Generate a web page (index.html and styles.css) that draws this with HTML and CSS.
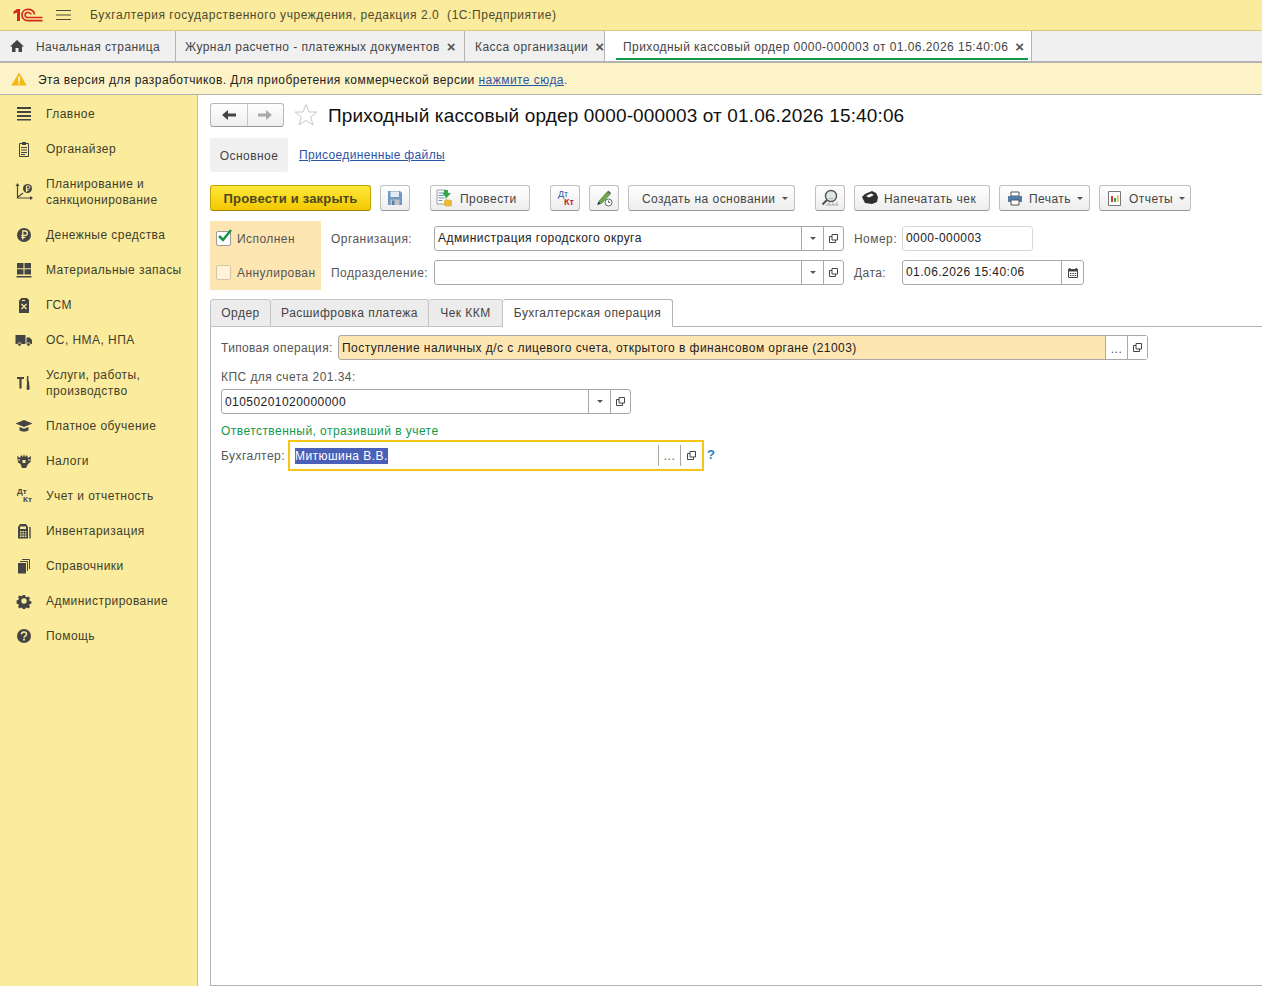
FILE: index.html
```html
<!DOCTYPE html>
<html lang="ru">
<head>
<meta charset="utf-8">
<title>Приходный кассовый ордер</title>
<link rel="stylesheet" href="styles.css">
</head>
<body>
<div class="app">
  <header class="topbar">
    <svg class="logo" width="30" height="16" viewBox="0 0 30 16"><path d="M.5 4.500 4 2h3v12H4V5.500L.5 7z" fill="#d5281f"/><path d="M21.500 7.500C21 4 18.300 2.400 15 2.400c-3.600 0-6 2.500-6 5.600s2.400 5.600 6 5.600H29.500" fill="none" stroke="#d5281f" stroke-width="1.700"/><path d="M18.300 7.500C17.800 6.200 16.600 5.400 15 5.400c-1.700 0-2.900 1.200-2.900 2.600s1.200 2.600 2.900 2.600H29.500" fill="none" stroke="#d5281f" stroke-width="1.500"/></svg>
    <svg class="burger" width="15" height="12" viewBox="0 0 15 12"><path d="M0 1.500h15M0 6h15M0 10.500h15" stroke="#4a4a3a" stroke-width="1"/></svg>
    <span class="app-title">Бухгалтерия государственного учреждения, редакция 2.0&nbsp; (1С:Предприятие)</span>
  </header>

  <nav class="tabbar">
    <div class="wtab wtab-home">
      <svg width="14" height="12" viewBox="0 0 14 12"><path d="M7 0 0 6.500h2V12h3.500V8h3v4H12V6.500h2z" fill="#444"/></svg>
      <span>Начальная страница</span>
    </div>
    <div class="wtab wtab-j"><span>Журнал расчетно - платежных документов</span><b class="x">×</b></div>
    <div class="wtab wtab-k"><span>Касса организации</span><b class="x">×</b></div>
    <div class="wtab wtab-active"><span>Приходный кассовый ордер 0000-000003 от 01.06.2026 15:40:06</span><b class="x">×</b></div>
  </nav>

  <div class="notice">
    <svg width="16" height="14" viewBox="0 0 16 14"><path d="M8 0.500 15.700 13.500H.3z" fill="#f5b90f"/><path d="M7.200 4.500h1.600v5H7.200zM7.200 10.500h1.600V12H7.200z" fill="#fff"/></svg>
    <span class="notice-text">Эта версия для разработчиков. Для приобретения коммерческой версии <a class="link" href="#">нажмите сюда</a><span class="muted">.</span></span>
  </div>

  <div class="main">
    <aside class="side">
      <div class="sitem"><svg width="16" height="16" viewBox="0 0 16 16"><path d="M1 1h14v2H1zM1 5h14v2H1zM1 9h14v2H1zM1 13h14v1.600H1z" fill="#444"/></svg><span>Главное</span></div>
      <div class="sitem"><svg width="16" height="16" viewBox="0 0 16 16"><path d="M3.500 2.500h9v13h-9z" fill="none" stroke="#444"/><path d="M6 1h4v3H6zM5 6h6v1H5zM5 8.500h6v1H5zM5 11h6v1H5zM5 13h4v1H5z" fill="#444"/></svg><span>Органайзер</span></div>
      <div class="sitem two"><svg width="18" height="18" viewBox="0 0 18 18"><path d="M2.500 2v13H17" fill="none" stroke="#444" stroke-width="1.200"/><path d="M2.500 0 .5 3h4zM18 15l-3-2v4z" fill="#444"/><path d="M3 14 8 10" stroke="#444" stroke-width="1.200"/><circle cx="12.500" cy="5.500" r="4.500" fill="#444"/><path d="M11.500 9V2.800h1.800a1.400 1.400 0 0 1 0 3h-2.500M10.800 7.400h2.800" fill="none" stroke="#fbeb9c"/></svg><span>Планирование и санкционирование</span></div>
      <div class="sitem"><svg width="16" height="16" viewBox="0 0 16 16"><circle cx="8" cy="8" r="7" fill="#444"/><path d="M6.800 12.500V4h2.400a2 2 0 0 1 0 4.300H5.300M5.300 10.400h4" fill="none" stroke="#fbeb9c" stroke-width="1.300"/></svg><span>Денежные средства</span></div>
      <div class="sitem"><svg width="16" height="16" viewBox="0 0 16 16"><path d="M1 1h6.500v5.300H1zM8.500 1H15v5.300H8.500zM1 7.300h6.500v5.300H1zM8.500 7.300H15v5.300H8.500zM.5 14H15.500v1.500H.5z" fill="#444"/></svg><span>Материальные запасы</span></div>
      <div class="sitem"><svg width="16" height="16" viewBox="0 0 16 16"><path d="M3 3.500 5.500 1h5.500l2 2v13H3z" fill="#444"/><path d="M5.500 7 10.500 12M10.500 7 5.500 12" stroke="#fbeb9c" stroke-width="1.200"/><path d="M6 3h3v1H6z" fill="#fbeb9c"/></svg><span>ГСМ</span></div>
      <div class="sitem"><svg width="17" height="16" viewBox="0 0 17 16"><path d="M0 3h10v9H0zM11 5.500h3.200L16.500 8v4H11z" fill="#444"/><circle cx="4" cy="12.500" r="1.800" fill="#444" stroke="#fbeb9c" stroke-width=".8"/><circle cx="13" cy="12.500" r="1.800" fill="#444" stroke="#fbeb9c" stroke-width=".8"/></svg><span>ОС, НМА, НПА</span></div>
      <div class="sitem two"><svg width="16" height="16" viewBox="0 0 16 16"><path d="M1 2h7v2H5.600v9.500H3.400V4H1z" fill="#444"/><path d="M11 1h1.400v5h.7v2l.5 5.500a1.500 1.500 0 0 1-3 0L11 8V6h-.3z" fill="#444"/></svg><span>Услуги, работы, производство</span></div>
      <div class="sitem"><svg width="17" height="16" viewBox="0 0 17 16"><path d="M8.500 2 17 5.500l-8.500 3.500L0 5.500z" fill="#444"/><path d="M4 9v3.500c2.500 1.500 6.500 1.500 9 0V9l-4.500 1.800z" fill="#444"/></svg><span>Платное обучение</span></div>
      <div class="sitem"><svg width="16" height="16" viewBox="0 0 16 16"><path d="M1 3 4 5l1-3 2 2 1-3 1 3 2-2 1 3 3-2-.5 6-2.500 2L10 15H6L4.500 11 2 9.500z" fill="#444"/><path d="M6.500 7h3v3h-3z" fill="#fbeb9c"/><path d="M3 6v2M13 6v2" stroke="#fbeb9c"/></svg><span>Налоги</span></div>
      <div class="sitem"><span class="dtkt"><i>Дт</i><i class="kt">Кт</i></span><span>Учет и отчетность</span></div>
      <div class="sitem"><svg width="16" height="16" viewBox="0 0 16 16"><path d="M2 4 4 1h6l2 3v11.500H2z" fill="#444"/><path d="M4 3.500h6v2.500H4z" fill="#fbeb9c"/><path d="M4 8h1.500v1.300H4zM6.400 8h1.500v1.300H6.400zM8.800 8h1.500v1.300H8.800zM4 10.300h1.500v1.300H4zM6.400 10.300h1.500v1.300H6.400zM8.800 10.300h1.500v1.300H8.800zM4 12.600h1.500v1.300H4zM6.400 12.600h1.500v1.300H6.400zM8.800 12.600h1.500v1.300H8.800z" fill="#fbeb9c"/><path d="M14 4v11.500" stroke="#444" stroke-width="1.400"/></svg><span>Инвентаризация</span></div>
      <div class="sitem"><svg width="16" height="16" viewBox="0 0 16 16"><path d="M2 5h8v10.500H2z" fill="#444"/><path d="M4 3.500h7.500V13M6 1.500h7.500V11" fill="none" stroke="#444"/></svg><span>Справочники</span></div>
      <div class="sitem"><svg width="16" height="16" viewBox="0 0 16 16"><path d="M6.600 1h2.800l.4 2 1.500.7 1.800-1.100 2 2-1.100 1.800.7 1.500 2 .4v2.800l-2 .4-.7 1.500 1.100 1.800-2 2-1.800-1.100-1.500.7-.4 2H6.600l-.4-2-1.500-.7-1.800 1.100-2-2 1.100-1.800-.7-1.500-2-.4V7.100l2-.4.700-1.500-1.100-1.800 2-2 1.800 1.100 1.500-.7z" transform="translate(1.200 1.200) scale(.85)" fill="#444"/><circle cx="8" cy="8" r="2.700" fill="#fbeb9c"/></svg><span>Администрирование</span></div>
      <div class="sitem"><svg width="16" height="16" viewBox="0 0 16 16"><circle cx="8" cy="8" r="7" fill="#444"/><path d="M5.500 6.300C5.500 4.800 6.600 4 8 4s2.500.8 2.500 2.100c0 2-2.500 1.900-2.500 3.700" fill="none" stroke="#fbeb9c" stroke-width="1.600"/><path d="M7.100 10.800h1.800v1.700H7.100z" fill="#fbeb9c"/></svg><span>Помощь</span></div>
    </aside>

    <section class="content">
      <div class="titlerow">
        <div class="navbtns">
          <div class="navb"><svg width="14" height="10" viewBox="0 0 14 10"><path d="M0 5 6 0v3.500h8v3H6V10z" fill="#444"/></svg></div>
          <div class="navb"><svg width="14" height="10" viewBox="0 0 14 10"><path d="M14 5 8 0v3.500H0v3h8V10z" fill="#aaa"/></svg></div>
        </div>
        <svg class="star" width="24" height="24" viewBox="0 0 24 24"><path d="M12 1.500 15 9h8l-6.300 5 2.300 8-7-4.600L5 22l2.300-8L1 9h8z" fill="#fff" stroke="#c9c9c9"/></svg>
        <h1>Приходный кассовый ордер 0000-000003 от 01.06.2026 15:40:06</h1>
      </div>

      <div class="subtabs">
        <div class="subtab">Основное</div>
        <a class="link sublink" href="#">Присоединенные файлы</a>
      </div>

      <div class="toolbar">
        <div class="btn primary w161"><span>Провести и закрыть</span></div>
        <div class="btn w30 m9"><svg width="16" height="16" viewBox="0 0 16 16"><path d="M1 1h12l2 2v12H1z" fill="#7397c2"/><path d="M3.500 1.500h8.500v5.500H3.500z" fill="#e3ebf4"/><path d="M3.500 9.500h9v5.500h-9z" fill="#b9c4cc"/><path d="M5 10.500h2.500V15H5z" fill="#5f7e9f"/></svg></div>
        <div class="btn lft w100 m20 pl5"><svg width="18" height="18" viewBox="0 0 18 18"><path d="M1 1h9v14H1z" fill="#fff" stroke="#8a8a8a" stroke-width=".8"/><path d="M2.500 4h6M2.500 6.500h5M2.500 9h6M2.500 11.500h4" stroke="#6f8fb0"/><path d="M8 1h4v3h3l-4.500 5L6 4h2z" fill="#38a84a"/><ellipse cx="12" cy="12" rx="4" ry="1.500" fill="#e9b93a"/><path d="M8 12v4c0 2 8 2 8 0v-4" fill="#e9b93a"/></svg><span>Провести</span></div>
        <div class="btn w30 m20"><span class="dtkt color"><i>Дт</i><i class="kt">Кт</i></span></div>
        <div class="btn w30 m9"><svg width="18" height="18" viewBox="0 0 18 18"><path d="M4 12 12 3l3 2.500L7 14l-3.500 1.500z" fill="#6aa84f" stroke="#4a7a35" stroke-width=".6"/><path d="M12 3l3 2.500 1.200-1.500-3-2.500z" fill="#666"/><path d="M2 16l1.500-3.500 2 2z" fill="#333"/><circle cx="13.500" cy="13.500" r="3.500" fill="#fff" stroke="#666"/><path d="M13.500 11.500v2h1.800" fill="none" stroke="#666"/></svg></div>
        <div class="btn lft w167 m9 pl13"><span>Создать на основании</span><i class="caret"></i></div>
        <div class="btn w30 m20"><svg width="18" height="18" viewBox="0 0 18 18"><circle cx="10" cy="7" r="5.500" fill="#dfe8e4" stroke="#555" stroke-width="1.400"/><path d="M6 11 1.500 15.500" stroke="#555" stroke-width="2.200"/><path d="M5 16h12M8 13v3M12 13v3M16 13v3M8 9.500h4" stroke="#9a9a9a" stroke-width=".8"/></svg></div>
        <div class="btn lft w136 m9 pl7"><svg width="16" height="14" viewBox="0 0 16 14"><path d="M0 6 3 3l7-3 4 2 2 4-1 5-5 2-7-1z" fill="#2e2e2e"/><path d="M4 5 9 2.500l3 1.500-5 2.500z" fill="#fff"/></svg><span>Напечатать чек</span></div>
        <div class="btn lft w91 m9 pl7"><svg width="16" height="15" viewBox="0 0 16 15"><path d="M4 1h8v4H4z" fill="#fff" stroke="#555"/><path d="M1 5h14v6H1z" fill="#4d7da8"/><path d="M4 9h8v5H4z" fill="#fff" stroke="#555"/></svg><span>Печать</span><i class="caret"></i></div>
        <div class="btn lft w92 m9 pl8"><svg class="rep" width="13" height="15" viewBox="0 0 13 15"><path d="M.5.500h12v14H.5z" fill="#fff" stroke="#777"/><path d="M3 5h2v6H3z" fill="#d33"/><path d="M6 7h2v4H6z" fill="#3a3"/><path d="M9 4h1.500v7H9z" fill="#e9b93a"/></svg><span>Отчеты</span><i class="caret"></i></div>
      </div>

      <div class="head">
        <div class="flags">
          <label class="flag"><span class="check"><svg width="16" height="14" viewBox="0 0 16 14"><path d="M2 7 6 11 14 1" fill="none" stroke="#16924a" stroke-width="2.500"/></svg></span>Исполнен</label>
          <label class="flag"><span class="check off"></span>Аннулирован</label>
        </div>
        <div class="hfields">
          <div class="hrow">
            <span class="lab w103">Организация:</span>
            <div class="field w410"><span class="val">Администрация городского округа</span><span class="fb w22"><i class="caret"></i></span><span class="fb w20"><svg class="open" width="9" height="9" viewBox="0 0 9 9"><path d="M3 .500h5.500v5.500H3zM3 2.500H.5v6h6V6" fill="none" stroke="#444"/></svg></span></div>
            <span class="lab lab-r">Номер:</span>
            <div class="field w131 soft"><span class="val">0000-000003</span></div>
          </div>
          <div class="hrow">
            <span class="lab w103">Подразделение:</span>
            <div class="field w410"><span class="val"></span><span class="fb w22"><i class="caret"></i></span><span class="fb w20"><svg class="open" width="9" height="9" viewBox="0 0 9 9"><path d="M3 .500h5.500v5.500H3zM3 2.500H.5v6h6V6" fill="none" stroke="#444"/></svg></span></div>
            <span class="lab lab-r">Дата:</span>
            <div class="field w182"><span class="val">01.06.2026 15:40:06</span><span class="fb w22"><svg width="10" height="10" viewBox="0 0 10 10"><path d="M.5 1.500h9v8h-9z" fill="none" stroke="#444"/><path d="M1 0h1.500v1H1zM7.500 0H9v1H7.500zM0 1h10v2.500H0zM2 5h1.500v1H2zM4.300 5h1.500v1H4.300zM6.600 5h1.500v1H6.600zM2 7h1.500v1H2zM4.300 7h1.500v1H4.300zM6.600 7h1.500v1H6.600z" fill="#444"/></svg></span></div>
          </div>
        </div>
      </div>

      <div class="ptabs">
        <div class="ptab w61">Ордер</div>
        <div class="ptab w158">Расшифровка платежа</div>
        <div class="ptab w74">Чек ККМ</div>
        <div class="ptab active w170">Бухгалтерская операция</div>
      </div>

      <div class="panel">
        <div class="prow-type">
          <span class="lab w117">Типовая операция:</span>
          <div class="field w810 orange"><span class="val">Поступление наличных д/с с лицевого счета, открытого в финансовом органе (21003)</span><span class="fb w22 white dots">...</span><span class="fb w20 white"><svg class="open" width="9" height="9" viewBox="0 0 9 9"><path d="M3 .500h5.500v5.500H3zM3 2.500H.5v6h6V6" fill="none" stroke="#444"/></svg></span></div>
        </div>
        <div class="lab kps-label">КПС для счета 201.34:</div>
        <div class="field w410"><span class="val">01050201020000000</span><span class="fb w22"><i class="caret"></i></span><span class="fb w20"><svg class="open" width="9" height="9" viewBox="0 0 9 9"><path d="M3 .500h5.500v5.500H3zM3 2.500H.5v6h6V6" fill="none" stroke="#444"/></svg></span></div>
        <div class="green">Ответственный, отразивший в учете</div>
        <div class="prow-buh">
          <span class="lab w67">Бухгалтер:</span>
          <div class="focus"><span class="val"><span class="sel">Митюшина В.В.</span></span><span class="fb w22 dots">...</span><span class="fb w22"><svg class="open" width="9" height="9" viewBox="0 0 9 9"><path d="M3 .500h5.500v5.500H3zM3 2.500H.5v6h6V6" fill="none" stroke="#444"/></svg></span></div>
          <span class="q">?</span>
        </div>
      </div>
    </section>
  </div>
</div>
</body>
</html>
```
FILE: styles.css
```css
* { box-sizing: border-box; }
html, body { margin: 0; height: 100%; overflow: hidden; }
body { font: 12px/16px "Liberation Sans", Arial, sans-serif; letter-spacing: .45px; color: #333; background: #fff; }
.app { display: flex; flex-direction: column; height: 986px; }

.topbar { height: 31px; flex: none; display: flex; align-items: center; background: #fbeb9c; border-bottom: 1px solid #d8c878; padding-left: 13px; }
.logo { margin-right: 13px; }
.burger { margin-right: 19px; }
.app-title { color: #4d4a30; white-space: pre; letter-spacing: .56px; }

.tabbar { height: 32px; flex: none; display: flex; background: #f0f0f0; border-bottom: 2px solid #b3b3b3; }
.wtab { display: flex; align-items: center; border-right: 1px solid #b3b3b3; white-space: nowrap; color: #444; padding-left: 9px; }
.wtab > span { padding-top: 2px; }
.wtab-home { width: 176px; padding-left: 10px; }
.wtab-home svg { margin-right: 12px; }
.wtab-j { width: 289px; }
.wtab-k { width: 140px; padding-left: 10px; }
.wtab-active { width: 427px; background: #fff; position: relative; padding-left: 18px; }
.wtab-active::after { content: ""; position: absolute; left: 11px; right: 3px; bottom: 1px; height: 2px; background: #0f9a4b; }
.x { font-size: 15px; font-weight: bold; color: #555; margin-left: 7px; line-height: 14px; letter-spacing: 0; padding-top: 2px; }

.notice { height: 32px; flex: none; display: flex; align-items: center; background: #fdf3c8; border-bottom: 1px solid #b3b3b3; padding-left: 11px; color: #222; }
.notice svg { margin-right: 11px; }
.notice-text { padding-top: 2px; }
.link { color: #2b55a8; text-decoration: underline; }
.muted { color: #666; }

.main { flex: 1; display: flex; min-height: 0; }
.side { width: 198px; flex: none; background: #fbeb9c; border-right: 1px solid #cfc07a; padding-top: 1px; }
.sitem { display: flex; align-items: center; height: 35px; padding-left: 15px; color: #403e2c; }
.sitem.two { height: 51px; }
.sitem > svg, .sitem > .dtkt { width: 18px; flex: none; margin-right: 13px; }
.sitem > span:last-child { max-width: 140px; }
.dtkt { display: inline-flex; flex-direction: column; font-size: 8px; line-height: 8px; font-weight: bold; font-style: normal; letter-spacing: 0; color: #444; padding-left: 2px; }
.dtkt i { font-style: normal; }
.dtkt .kt { padding-left: 6px; }
.dtkt.color { color: #2b55a8; width: 18px; font-size: 9px; line-height: 8px; padding-left: 2px; font-weight: normal; }
.dtkt.color .kt { color: #c8201c; font-weight: bold; }

.content { flex: 1; min-width: 0; display: flex; flex-direction: column; padding: 8px 0 0 12px; }
.titlerow { display: flex; align-items: center; height: 24px; }
.navbtns { display: flex; width: 74px; height: 24px; border: 1px solid #b8b8b8; border-bottom-color: #999; border-radius: 3px; background: linear-gradient(#fff, #eee); }
.navb { flex: 1; display: flex; align-items: center; justify-content: center; }
.navb + .navb { border-left: 1px solid #c8c8c8; }
.star { margin: 0 10px 0 10px; }
h1 { margin: 0; padding-top: 2px; font-size: 19px; line-height: 24px; font-weight: normal; color: #111; letter-spacing: .14px; white-space: nowrap; }

.subtabs { display: flex; align-items: center; height: 34px; margin-top: 11px; }
.subtab { width: 78px; height: 34px; line-height: 36px; text-align: center; background: #f0f0f0; border-radius: 3px; color: #444; }
.sublink { margin-left: 11px; letter-spacing: .35px; }

.toolbar { display: flex; height: 26px; margin-top: 13px; }
.btn { height: 26px; display: flex; align-items: center; justify-content: center; gap: 6px; border: 1px solid #c0c0c0; border-bottom-color: #999; border-radius: 3px; background: linear-gradient(#fff, #ededed); color: #444; white-space: nowrap; flex: none; }
.btn > span:not(.dtkt) { padding-top: 2px; }
.lft { justify-content: flex-start; }
.pl5 { padding-left: 5px; } .pl7 { padding-left: 7px; } .pl8 { padding-left: 8px; } .pl13 { padding-left: 13px; }
.rep { margin-right: 2px; }
.primary { background: linear-gradient(#ffe93a, #f3c800); border-color: #c2a400; border-bottom-color: #9c8400; color: #4c4720; font-weight: bold; font-size: 13px; letter-spacing: .2px; }
.m9 { margin-left: 9px; }
.m20 { margin-left: 20px; }
.w30 { width: 30px; } .w91 { width: 91px; } .w92 { width: 92px; } .w100 { width: 100px; }
.w136 { width: 136px; } .w161 { width: 161px; } .w167 { width: 167px; }
.caret { width: 0; height: 0; border: 3px solid transparent; border-top: 3px solid #555; border-bottom: 0; display: inline-block; }

.head { display: flex; margin-top: 10px; height: 69px; }
.flags { width: 111px; background: #fee6b3; padding: 5px 0 0 6px; }
.flag { display: flex; align-items: center; height: 25px; margin-bottom: 9px; color: #555; gap: 6px; white-space: nowrap; }
.check { width: 15px; height: 15px; border: 1px solid #9a9a9a; border-radius: 2px; background: #fff; display: flex; position: relative; flex: none; }
.check svg { position: absolute; left: 0; top: -3px; }
.check.off { background: #fff3dc; border-color: #d5c4a0; }
.hfields { padding: 5px 0 0 10px; }
.hrow { display: flex; align-items: center; height: 25px; margin-bottom: 9px; }
.lab { color: #555; white-space: nowrap; }
.w103 { width: 103px; } .w117 { width: 117px; letter-spacing: .33px; } .w67 { width: 67px; }
.lab-r { width: 48px; margin-left: 10px; }
.field { height: 25px; display: flex; border: 1px solid #a8a8a8; border-radius: 3px; background: #fff; flex: none; }
.w410 { width: 410px; } .w131 { width: 131px; } .w182 { width: 182px; } .w810 { width: 810px; }
.soft { border-color: #d8d8d8; }
.val { flex: 1; min-width: 0; padding-left: 3px; line-height: 23px; color: #222; white-space: nowrap; }
.fb { display: flex; align-items: center; justify-content: center; flex: none; border-left: 1px solid #a8a8a8; }
.w22 { width: 22px; } .w20 { width: 20px; }
.orange { background: #fee6b3; }
.white { background: #fff; }
.dots { align-items: flex-end; padding-bottom: 3px; line-height: 14px; color: #555; }

.ptabs { display: flex; height: 28px; margin-top: 9px; border-bottom: 1px solid #b3b3b3; }
.ptab { height: 28px; line-height: 26px; text-align: center; background: #ececec; border: 1px solid #c4c4c4; border-left-width: 0; border-radius: 3px 3px 0 0; color: #444; flex: none; }
.ptab:first-child { border-left-width: 1px; }
.ptab.active { background: #fff; border-color: #b3b3b3; border-bottom: 1px solid #fff; }
.w61 { width: 61px; } .w158 { width: 158px; } .w74 { width: 74px; } .w170 { width: 170px; }

.panel { flex: 1; border-left: 1px solid #b3b3b3; border-bottom: 1px solid #b3b3b3; padding: 8px 0 0 10px; margin-bottom: 0; }
.panel .val { line-height: 25px; }
.prow-type { display: flex; align-items: center; height: 25px; }
.kps-label { margin-top: 9px; height: 16px; margin-bottom: 4px; }
.green { color: #0f9a4b; margin-top: 9px; height: 16px; }
.prow-buh { display: flex; align-items: center; height: 31px; margin-top: 1px; }
.focus { width: 416px; height: 31px; display: flex; align-items: stretch; border: 2px solid #f5c518; flex: none; padding: 3px 0; }
.panel .focus .val { padding-left: 5px; line-height: 23px; }
.sel { background: #4a5fb8; color: #fff; padding: 1px 0; }
.q { color: #2b7fc0; margin-left: 3px; font-size: 13px; font-weight: bold; margin-top: -2px; }
```
